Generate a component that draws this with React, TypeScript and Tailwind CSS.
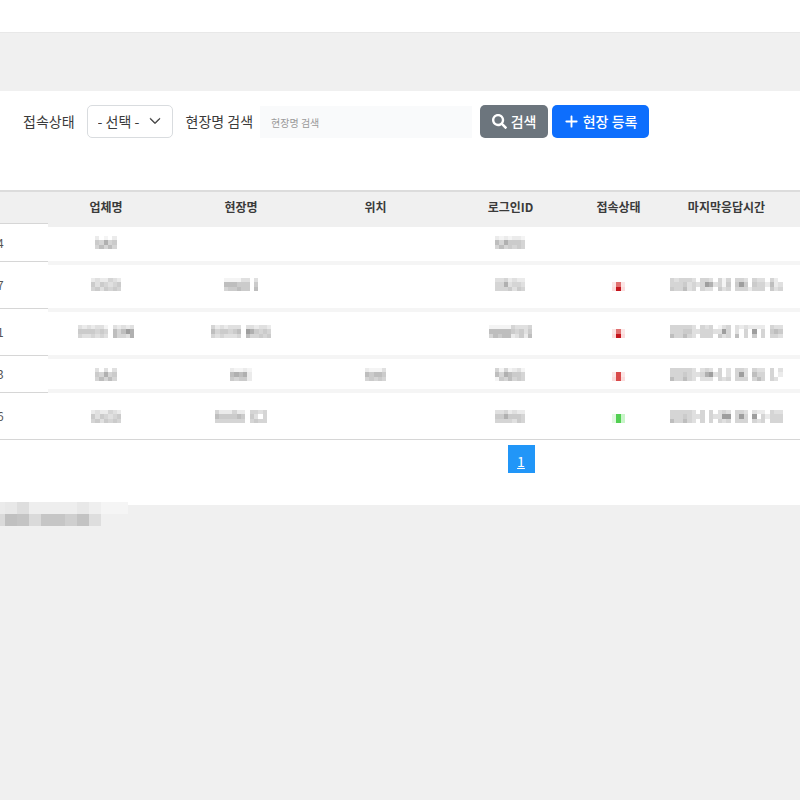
import React from "react";
import { FaSearch } from "react-icons/fa";
import { FaPlus } from "react-icons/fa6";
import { BsChevronDown } from "react-icons/bs";
import { clsx } from "clsx";

interface SiteRow {
  no: string;
  company: string[];
  site?: string[];
  location?: string[];
  login: string[];
  status?: string[];
  lastSeen?: string[];
  rowClass: string;
  cellClass: string;
}

// "." is empty, 1-8 go from light to dark grey, letters are the status colors
const SHADES: Record<string, string> = {
  "1": "#f4f4f4",
  "2": "#ebebeb",
  "3": "#e0e0e0",
  "4": "#d5d5d5",
  "5": "#cbcbcb",
  "6": "#bebebe",
  "7": "#b0b0b0",
  "8": "#9e9e9e",
  p: "#fbdcdc",
  q: "#fbe6e6",
  r: "#d94a4a",
  s: "#c4141c",
  t: "#e07070",
  f: "#e2f9e2",
  h: "#c9f5c9",
  g: "#52cf52",
};

// Masked value, three rows of small blocks
function Masked({ rows, label }: { rows: string[]; label: string }) {
  const cols = rows[0].length;
  return (
    <svg
      className="mx-auto block h-[13px] w-auto"
      viewBox={`0 0 ${cols} 3`}
      shapeRendering="crispEdges"
      role="img"
      aria-label={label}
    >
      {rows.flatMap((row, y) =>
        row.split("").map((c, x) =>
          c === "." ? null : <rect key={`${x}-${y}`} x={x} y={y} width={1} height={1} fill={SHADES[c]} />
        )
      )}
    </svg>
  );
}

const SHORT = ["2.1.2", "54745", "46464"];
const MEDIUM = ["2322432", "5354345", "4535454"];

const SITES: SiteRow[] = [
  {
    no: "4",
    company: SHORT,
    login: ["2121221", "6475554", "4645454"],
    rowClass: "h-[38px]",
    cellClass: "border-t-[3px] border-b border-t-[#f0f0f0] border-b-[#f5f5f5] pb-1",
  },
  {
    no: "7",
    company: MEDIUM,
    site: ["111133.3", "666555.5", "455655.6"],
    login: ["3342322", "4473443", "4445354"],
    status: ["...", "qtq", "psp"],
    lastSeen: ["434443.443.414.443.433.42.", "44453434873415.585.5442623", "544634.433.534.4442444.534"],
    rowClass: "h-[47px]",
    cellClass: "border-t-[3px] border-b border-[#f5f5f5] pb-1",
  },
  {
    no: "1",
    company: ["3232331.32323", "5555454.64687", "4334343.64437"],
    site: ["4232333.332332", "6455456.875454", "4343334.644545"],
    login: ["1111143334", "6666654535", "4656623526"],
    status: ["...", "qtq", "psp"],
    lastSeen: ["444443.434.134.3232222.433", "44455334443384.3.4.8.4.565", "644643.444.534.6.4.5.4.443"],
    rowClass: "h-[47px]",
    cellClass: "border-t-[3px] border-b border-[#f5f5f5] pb-1",
  },
  {
    no: "3",
    company: ["3.3.3", "54745", "46464"],
    site: ["21121", "67672", "54552"],
    location: ["21113", "65665", "45454"],
    login: ["4141231", "6476554", "1546454"],
    status: ["...", "qrq", "prp"],
    lastSeen: ["444443.343.4.3.443.433.4.3", "444543347834.3.483.644.4.2", "644643.333.434.444.464.43."],
    rowClass: "h-[37px]",
    cellClass: "border-t-[3px] border-b-4 border-[#f5f5f5]",
  },
  {
    no: "6",
    company: MEDIUM,
    site: ["4222422.4434", "6555565.53.4", "4444444.4544"],
    login: ["3342322", "5575554", "4444354"],
    status: ["...", "fgh", "fgh"],
    lastSeen: ["444443.4.4.343.443.322.433", "44454334.43388.484.8.42444", "644643.4.4.434.444.434.444"],
    rowClass: "h-[47px]",
    cellClass: "border-b border-[#d6d6d6]",
  },
];

const HEADERS = ["업체명", "현장명", "위치", "로그인ID", "접속상태", "마지막응답시간"];

function FilterBar() {
  return (
    <form className="flex items-center pl-[23px] text-sm text-[#3a3a3a]" onSubmit={(e) => e.preventDefault()}>
      <label htmlFor="status" className="pb-0.5">
        접속상태
      </label>
      <div className="relative ml-3">
        <select
          id="status"
          className="h-[33px] w-[86px] appearance-none rounded-[5px] border border-[#d9dcdf] bg-white pb-0.5 pl-[10px] text-sm"
        >
          <option>- 선택 -</option>
        </select>
        <BsChevronDown className="pointer-events-none absolute top-2.5 right-3 size-3" strokeWidth={1} />
      </div>
      <label htmlFor="keyword" className="ml-[13px] pb-0.5">
        현장명 검색
      </label>
      <input
        id="keyword"
        type="text"
        placeholder="현장명 검색"
        className="ml-[7px] h-8 w-[212px] bg-[#f9fafb] px-[11px] pt-0.5 text-[10px] placeholder:text-[#999]"
      />
      <button
        type="submit"
        className="ml-2 flex h-[33px] w-[68px] items-center justify-center gap-1 rounded-[5px] bg-[#6c757d] pb-0.5 font-medium text-white"
      >
        <FaSearch className="mt-0.5 size-[15px]" />
        검색
      </button>
      <button
        type="button"
        className="ml-1 flex h-[33px] w-[97px] items-center justify-center gap-1 rounded-[5px] bg-[#0d6efd] pb-0.5 font-medium text-white"
      >
        <FaPlus className="mt-0.5 size-[15px]" />
        현장 등록
      </button>
    </form>
  );
}

function SiteTable() {
  return (
    <table className="w-full table-fixed border-separate border-spacing-0 text-center text-xs text-[#555]">
      <colgroup>
        <col className="w-[6%]" />
        <col className="w-[14.5%]" />
        <col className="w-[19.25%]" />
        <col className="w-[14.375%]" />
        <col className="w-[19.375%]" />
        <col className="w-[7.625%]" />
        <col />
      </colgroup>
      <thead>
        <tr className="h-[34px] bg-[#f0f0f0] text-[#3a3a3a]">
          <td className="border-t-2 border-b border-t-[#dcdcdc] border-b-[#d6d6d6]" />
          {HEADERS.map((header) => (
            <th
              key={header}
              scope="col"
              className="border-t-2 border-t-[#dcdcdc] p-0 pb-0.5 font-bold whitespace-nowrap last:pl-1"
            >
              {header}
            </th>
          ))}
        </tr>
      </thead>
      <tbody>
        {SITES.map((row) => (
          <tr key={row.no} className={row.rowClass}>
            <td className="border-b border-[#d6d6d6] p-0 text-left">
              <span className="-ml-[3px]">{row.no}</span>
            </td>
            {[row.company, row.site, row.location, row.login, row.status, row.lastSeen].map((value, i) => (
              <td key={HEADERS[i]} className={clsx("p-0 last:pl-1", row.cellClass)}>
                {value && <Masked rows={value} label={HEADERS[i]} />}
              </td>
            ))}
          </tr>
        ))}
      </tbody>
    </table>
  );
}

// Footer text, masked with larger blocks
const FOOTER_BLOCKS = [
  ["#ebebeb", "#e8e8e8", "#dedede", "#eeeeee", "#eeeeee", "#eeeeee", "#eeeeee", "#e8e8e8", "#efefef", "#f5f5f5", "#f5f5f5"],
  ["#dadada", "#c0c0c0", "#c4c4c4", "#dadada", "#c6c6c6", "#c6c6c6", "#cfcfcf", "#c3c3c3", "#dedede", "#f0f0f0", "#f0f0f0"],
];

export default function App() {
  return (
    <div className="min-h-screen bg-[#f0f0f0] font-['Noto_Sans_CJK_KR',sans-serif]">
      <header className="h-[33px] border-b border-[#e8e8e8] bg-white" />
      <main className="mt-[58px] bg-white pt-[14px] pb-8">
        <FilterBar />
        <div className="mt-[52px]">
          <SiteTable />
        </div>
        <nav className="mt-[5px] flex justify-center pl-[242px]" aria-label="페이지">
          <a
            href="#1"
            aria-current="page"
            className="flex h-7 w-[27px] items-center justify-center bg-[#2196f8] pt-1 text-sm text-white underline"
          >
            1
          </a>
        </nav>
      </main>
      <footer className="-mt-[3px]">
        <svg className="block h-6 w-[128px]" viewBox="0 0 128 24" shapeRendering="crispEdges" aria-hidden="true">
          {FOOTER_BLOCKS.map((row, y) =>
            row.map((fill, i) => (
              <rect key={`${i}-${y}`} x={i === 0 ? 0 : i * 12 - 7} y={y * 12} width={i === 10 ? 15 : 12} height={12} fill={fill} />
            ))
          )}
        </svg>
      </footer>
    </div>
  );
}
